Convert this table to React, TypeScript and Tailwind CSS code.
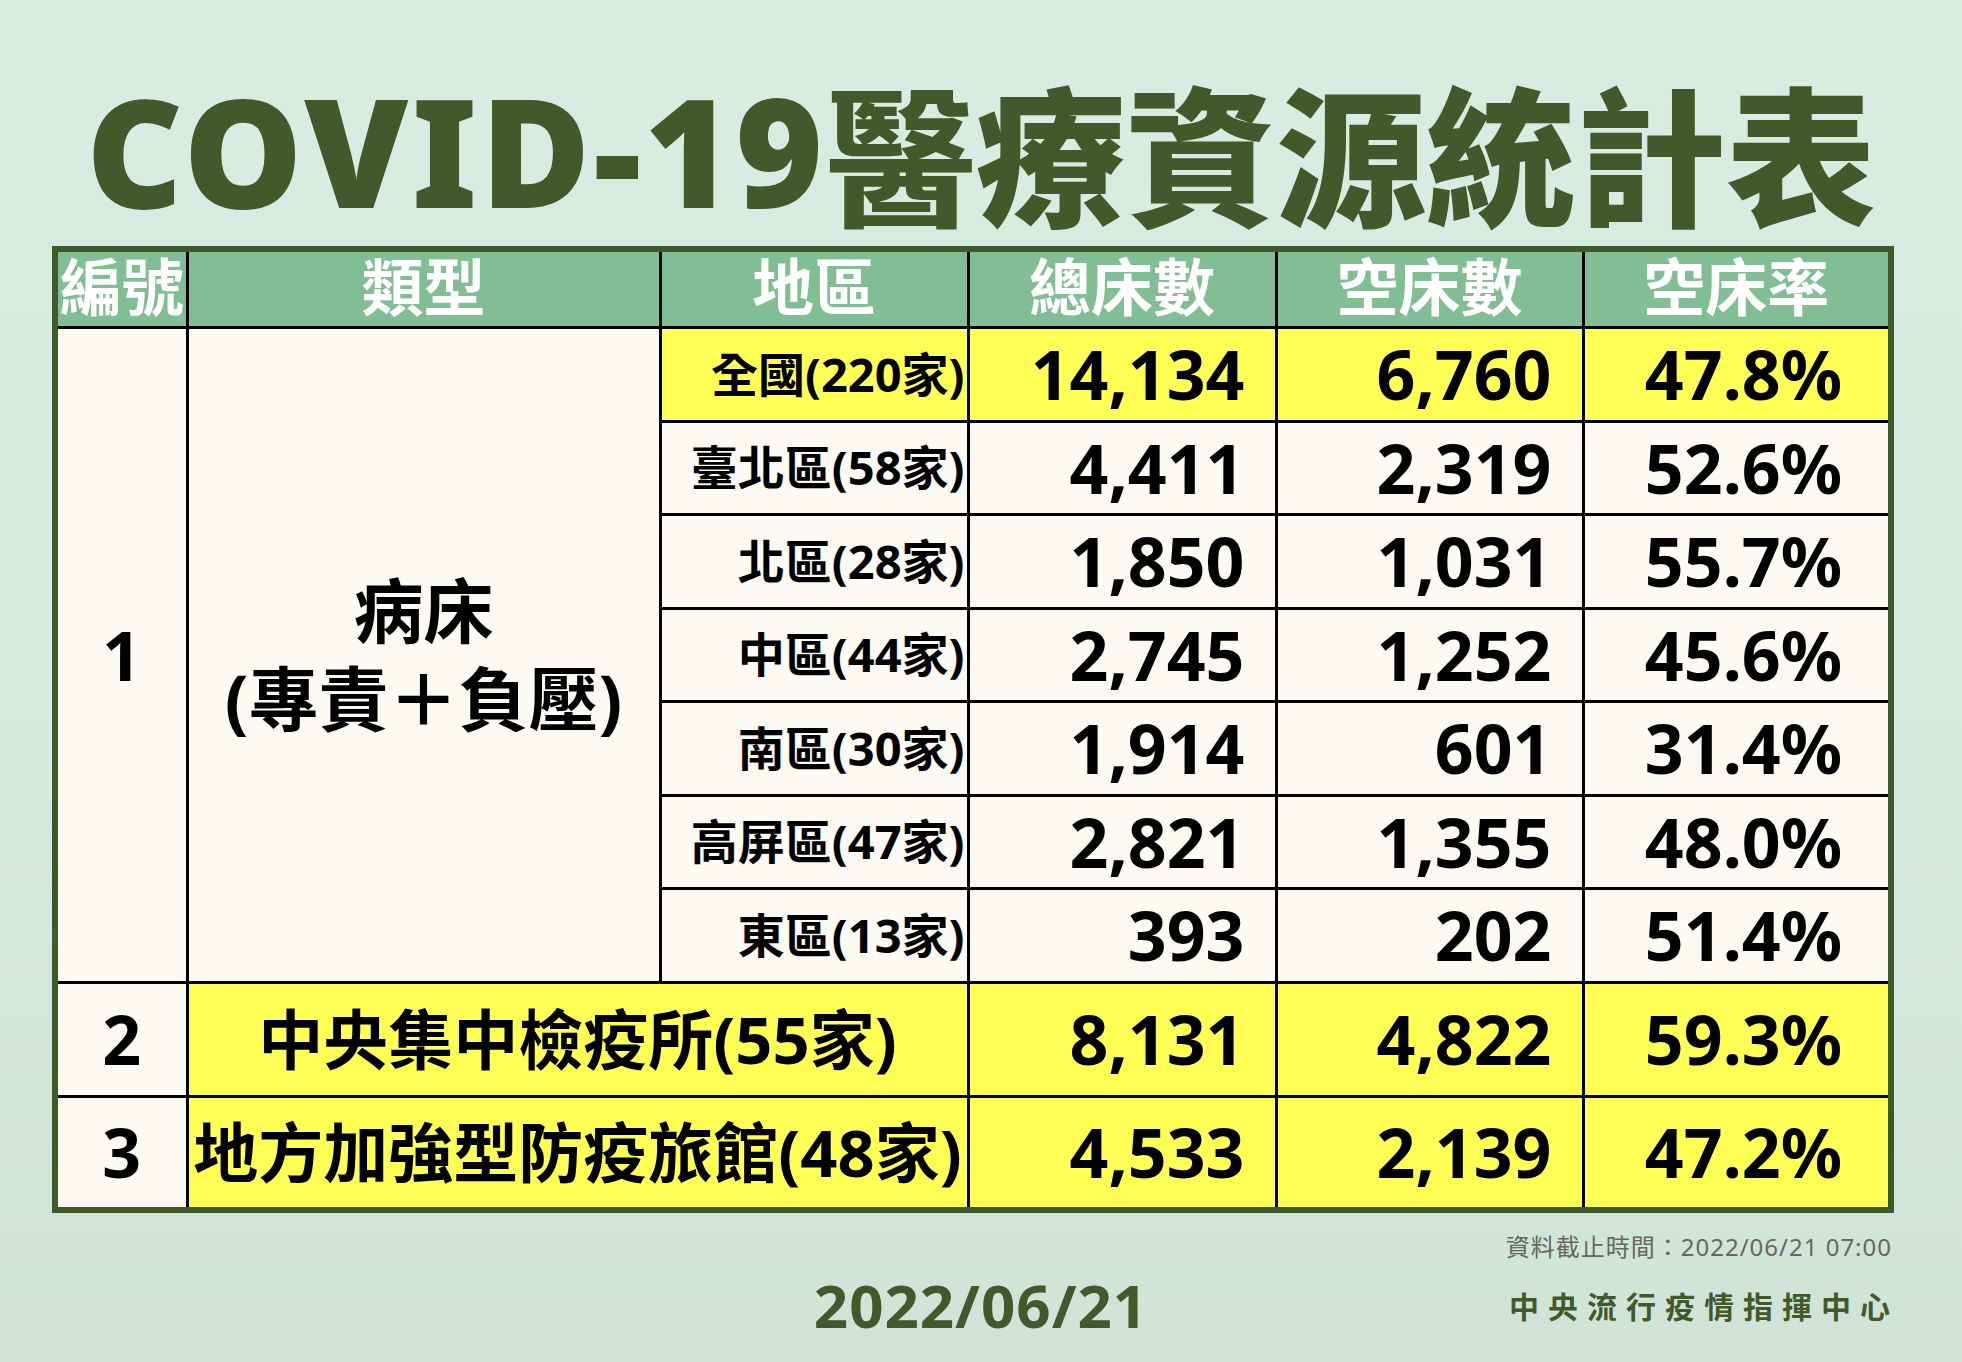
import React from 'react';

const cjk = '"Noto Sans CJK TC", sans-serif';
const mixed = '"Noto Sans", "Noto Sans CJK TC", sans-serif';

type Region = { name: string; total: string; empty: string; rate: string; highlight?: boolean };

const regions: Region[] = [
  { name: '全國(220家)', total: '14,134', empty: '6,760', rate: '47.8%', highlight: true },
  { name: '臺北區(58家)', total: '4,411', empty: '2,319', rate: '52.6%' },
  { name: '北區(28家)', total: '1,850', empty: '1,031', rate: '55.7%' },
  { name: '中區(44家)', total: '2,745', empty: '1,252', rate: '45.6%' },
  { name: '南區(30家)', total: '1,914', empty: '601', rate: '31.4%' },
  { name: '高屏區(47家)', total: '2,821', empty: '1,355', rate: '48.0%' },
  { name: '東區(13家)', total: '393', empty: '202', rate: '51.4%' },
];

const others = [
  { no: '2', name: '中央集中檢疫所(55家)', total: '8,131', empty: '4,822', rate: '59.3%' },
  { no: '3', name: '地方加強型防疫旅館(48家)', total: '4,533', empty: '2,139', rate: '47.2%' },
];

const headers = ['編號', '類型', '地區', '總床數', '空床數', '空床率'];

function NumCells({ total, empty, rate, bg }: { total: string; empty: string; rate: string; bg: string }) {
  return (
    <>
      <td className={`border-[3px] border-black ${bg} pr-[30px] text-right text-[68px] font-bold leading-none`}>{total}</td>
      <td className={`border-[3px] border-black ${bg} pr-[30px] text-right text-[68px] font-bold leading-none`}>{empty}</td>
      <td className={`border-[3px] border-black ${bg} pr-[46px] text-right text-[68px] font-bold leading-none`}>{rate}</td>
    </>
  );
}

export default function App() {
  return (
    <div
      className="flex h-[1362px] w-full flex-col bg-gradient-to-b from-[#d8ede1] via-[#d6ebdf] to-[#cfe4d7] text-black"
      style={{ fontFamily: mixed }}
    >
      <h1 className="flex justify-center pt-[60px] text-[150px] font-black leading-[180px] text-[#41592b]">
        <span className="tracking-[3px]">COVID-19</span>
        <span style={{ fontFamily: cjk }}>醫療資源統計表</span>
      </h1>

      <div className="mt-[6px] pl-[52px]">
        <table className="w-[1838px] table-fixed border-collapse border-[6px] border-[#3e5a2a]">
          <colgroup>
            <col className="w-[132px]" />
            <col className="w-[473px]" />
            <col className="w-[308px]" />
            <col className="w-[308px]" />
            <col className="w-[307px]" />
            <col className="w-[308px]" />
          </colgroup>
          <thead>
            <tr className="h-[78px] bg-[#82be93]">
              {headers.map((h) => (
                <th
                  key={h}
                  className="whitespace-nowrap border-[3px] border-black p-0 pb-[10px] text-center text-[62px] font-bold leading-[62px] text-white"
                  style={{ fontFamily: cjk }}
                >
                  {h}
                </th>
              ))}
            </tr>
          </thead>
          <tbody>
            {regions.map((r, i) => {
              const bg = r.highlight ? 'bg-[#ffff55]' : 'bg-[#fdf9f3]';
              return (
                <tr key={r.name} className={i % 2 === 0 ? 'h-[94px]' : 'h-[93px]'}>
                  {i === 0 && (
                    <>
                      <td
                        rowSpan={7}
                        className="border-[3px] border-black bg-[#fdf9f3] text-center text-[68px] font-bold leading-none"
                      >
                        1
                      </td>
                      <td
                        rowSpan={7}
                        className="border-[3px] border-black bg-[#fdf9f3] text-center text-[70px] font-bold leading-[88px]"
                      >
                        病床
                        <br />
                        (專責＋負壓)
                      </td>
                    </>
                  )}
                  <td className={`whitespace-nowrap border-[3px] border-black ${bg} pr-[2px] text-right text-[47px] font-bold leading-none`}>
                    {r.name}
                  </td>
                  <NumCells total={r.total} empty={r.empty} rate={r.rate} bg={bg} />
                </tr>
              );
            })}
            {others.map((o) => (
              <tr key={o.no} className="h-[114px]">
                <td className="border-[3px] border-black bg-[#fdf9f3] text-center text-[68px] font-bold leading-none">{o.no}</td>
                <td
                  colSpan={2}
                  className="whitespace-nowrap border-[3px] border-black bg-[#ffff55] p-0 text-center text-[65px] font-bold leading-none"
                >
                  {o.name}
                </td>
                <NumCells total={o.total} empty={o.empty} rate={o.rate} bg="bg-[#ffff55]" />
              </tr>
            ))}
          </tbody>
        </table>
      </div>

      <div className="mt-[22px] flex justify-end pr-[70px] text-[24px] leading-none tracking-[1px] text-[#666666]">
        資料截止時間：2022/06/21 07:00
      </div>

      <div className="mt-[16px] grid grid-cols-[1fr_auto_1fr] items-center px-[72px] text-[#41592b]">
        <div />
        <div className="text-[60px] font-bold leading-none tracking-[1px]">2022/06/21</div>
        <div className="flex justify-end">
          <span className="mr-[-9px] text-[30px] font-bold leading-none tracking-[9px]" style={{ fontFamily: cjk }}>
            中央流行疫情指揮中心
          </span>
        </div>
      </div>
    </div>
  );
}
